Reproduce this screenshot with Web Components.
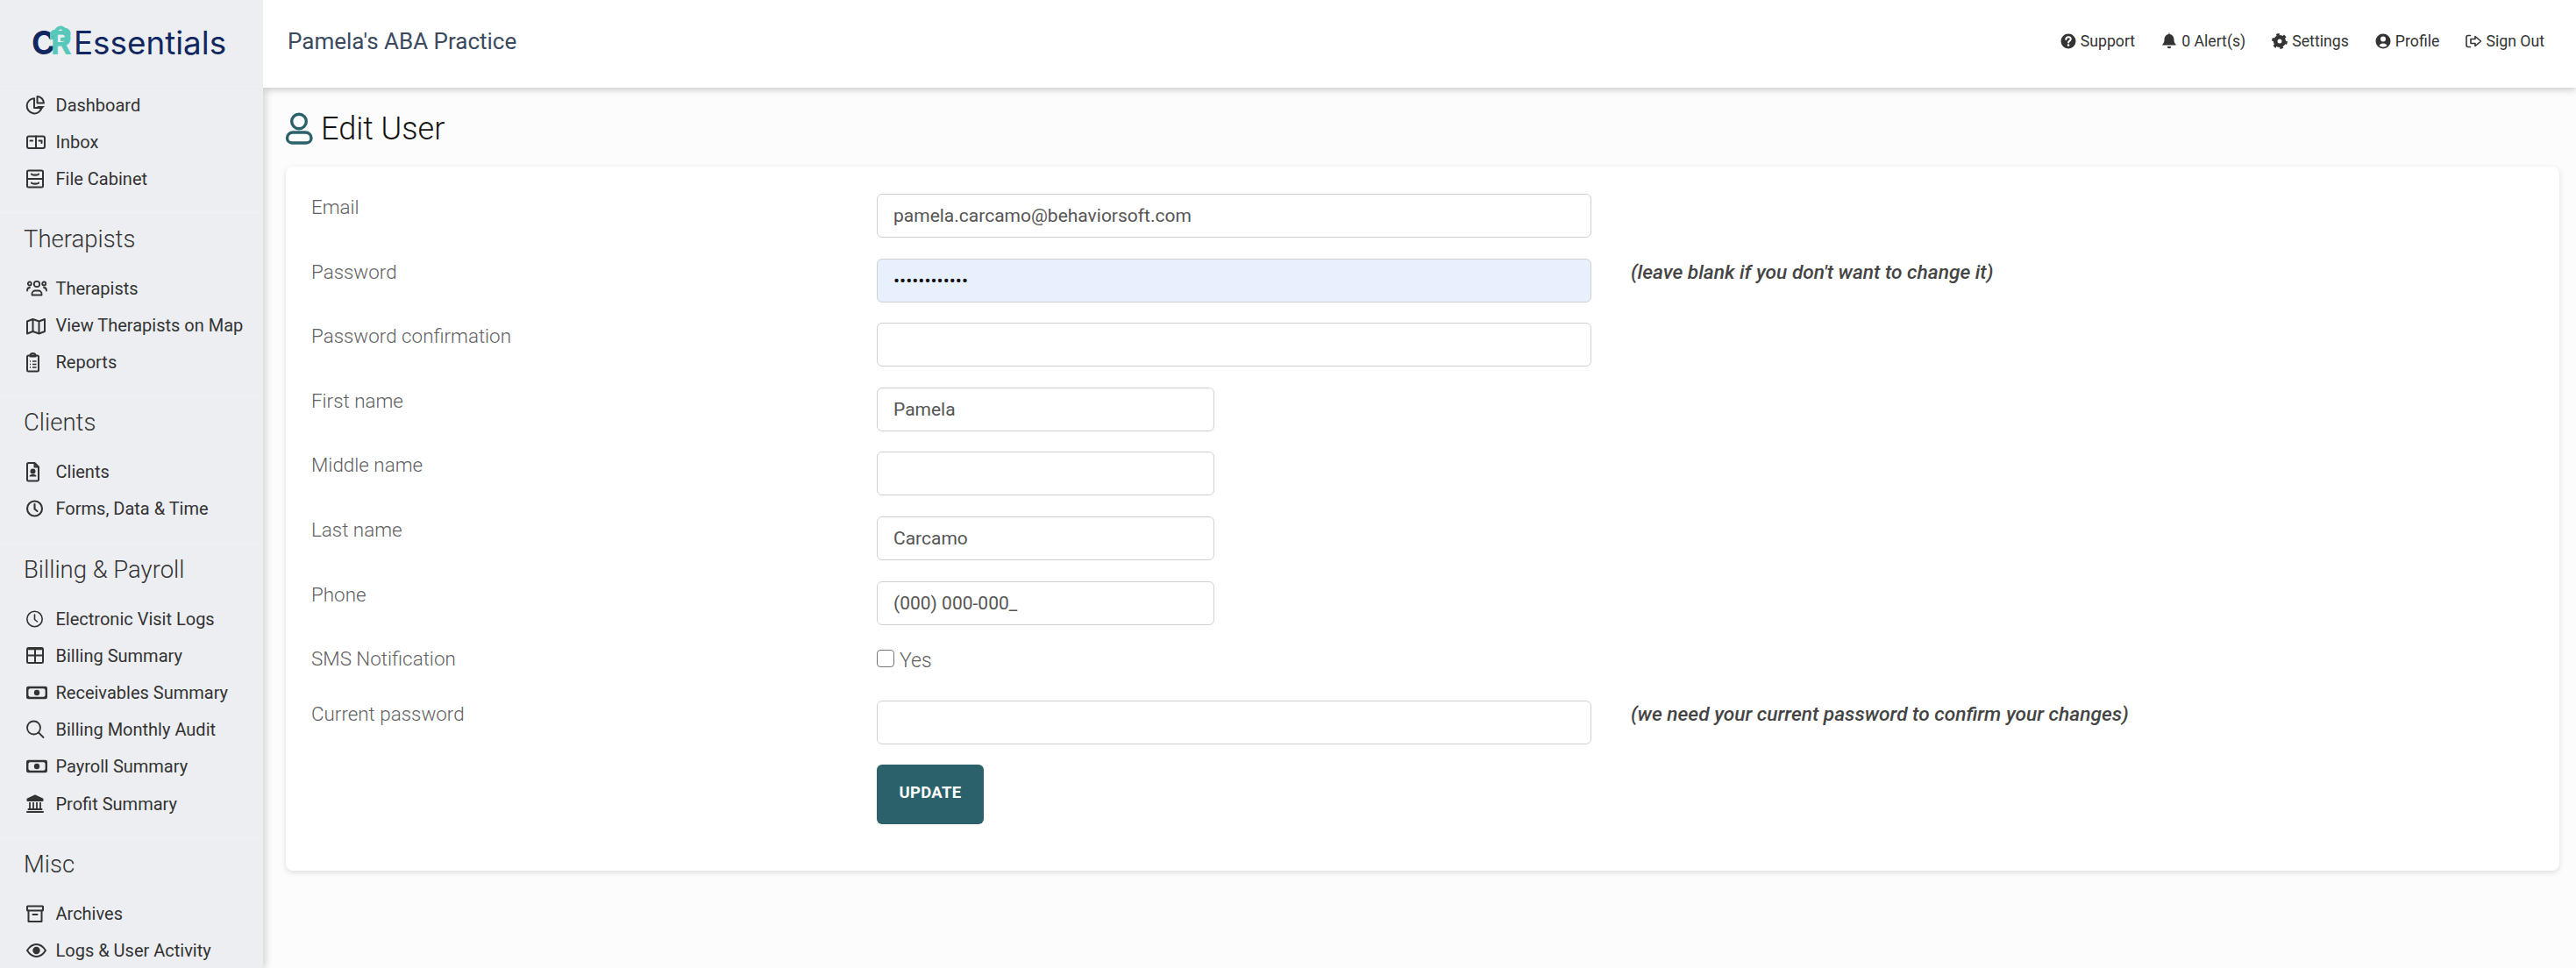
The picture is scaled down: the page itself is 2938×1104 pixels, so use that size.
<!DOCTYPE html>
<html lang="en">
<head>
<meta charset="utf-8">
<title>Edit User</title>
<style>
  html, body { margin: 0; height: 100%; overflow: hidden; }
  body { font-family: Roboto, "Liberation Sans", sans-serif; background: #fcfcfc; }
</style>
</head>
<body>
<app-shell>
  <side-bar slot="side">
    <nav-section>
      <nav-item icon="pie" label="Dashboard"></nav-item>
      <nav-item icon="inbox" label="Inbox"></nav-item>
      <nav-item icon="cabinet" label="File Cabinet"></nav-item>
    </nav-section>
    <nav-section heading="Therapists">
      <nav-item icon="users" label="Therapists"></nav-item>
      <nav-item icon="map" label="View Therapists on Map"></nav-item>
      <nav-item icon="clipboard" label="Reports"></nav-item>
    </nav-section>
    <nav-section heading="Clients">
      <nav-item icon="fileuser" label="Clients"></nav-item>
      <nav-item icon="clockbold" label="Forms, Data &amp; Time"></nav-item>
    </nav-section>
    <nav-section heading="Billing &amp; Payroll">
      <nav-item icon="clock" label="Electronic Visit Logs"></nav-item>
      <nav-item icon="table" label="Billing Summary"></nav-item>
      <nav-item icon="money" label="Receivables Summary"></nav-item>
      <nav-item icon="search" label="Billing Monthly Audit"></nav-item>
      <nav-item icon="money" label="Payroll Summary"></nav-item>
      <nav-item icon="bank" label="Profit Summary"></nav-item>
    </nav-section>
    <nav-section heading="Misc">
      <nav-item icon="archive" label="Archives"></nav-item>
      <nav-item icon="eye" label="Logs &amp; User Activity"></nav-item>
    </nav-section>
  </side-bar>
  <top-bar slot="top" practice="Pamela's ABA Practice">
    <top-link icon="question" label="Support"></top-link>
    <top-link icon="bell" label="0 Alert(s)"></top-link>
    <top-link icon="cog" label="Settings"></top-link>
    <top-link icon="usercircle" label="Profile"></top-link>
    <top-link icon="signout" label="Sign Out"></top-link>
  </top-bar>
  <edit-user-page>
    <form-row label="Email" value="pamela.carcamo@behaviorsoft.com"></form-row>
    <form-row label="Password" type="password" value="............" autofilled hint="(leave blank if you don't want to change it)"></form-row>
    <form-row label="Password confirmation" type="password"></form-row>
    <form-row label="First name" value="Pamela" size="small"></form-row>
    <form-row label="Middle name" size="small"></form-row>
    <form-row label="Last name" value="Carcamo" size="small"></form-row>
    <form-row label="Phone" value="(000) 000-000_" size="small"></form-row>
    <check-row label="SMS Notification" text="Yes"></check-row>
    <form-row label="Current password" type="password" hint="(we need your current password to confirm your changes)"></form-row>
    <submit-row text="UPDATE"></submit-row>
  </edit-user-page>
</app-shell>

<script>
const ICONS = {
  pie: '<path d="M9 4.200A8.600 8.600 0 1 0 17.600 15H9z"/><path d="M12.500 2A8 8 0 0 1 20 9.500h-7.500z"/><path d="M12 13h9l-4.500 4.500z" fill="currentColor" stroke="none"/>',
  inbox: '<rect x="1" y="5.500" width="20" height="13.500" rx="2"/><path d="M11 5.500V19M4.500 10.500h2.600M14.500 10.500h3V13"/>',
  cabinet: '<rect x="1" y="2.500" width="18" height="19" rx="1.500"/><path d="M1 12h18M6 6.500c0 1.500 8 1.500 8 0M6 16.500c0 1.500 8 1.500 8 0"/>',
  users: '<g stroke-width="1.800"><circle cx="12" cy="7" r="3.200"/><circle cx="3.800" cy="6.500" r="2"/><circle cx="20.200" cy="6.500" r="2"/><path d="M6.500 19.500v-1.500a3.500 3.500 0 0 1 3.500-3.500h4a3.500 3.500 0 0 1 3.500 3.500v1.500zM1 14.500c0-2 1.200-3.500 3-3.500M23 14.500c0-2-1.200-3.500-3-3.500"/></g>',
  map: '<path d="M1 7.500l6.500-2.500 7 2.500L21 5v14l-6.500 2.500L7.500 19 1 21.500zM7.500 5v14M14.500 7.500v14"/>',
  clipboard: '<rect x="1" y="4.500" width="13" height="18" rx="1.500"/><path d="M4.500 4.500c0-2 1.500-2.500 3-2.500s3 .5 3 2.500v1h-6z"/><path d="M4 11h1M7 11h4.500M4 14.500h1M7 14.500h4.500M4 18h1M7 18h4.500" stroke-width="1.400" stroke-linecap="butt"/>',
  fileuser: '<path d="M1 3.500A1.500 1.500 0 0 1 2.500 2H9.500L14 6.500V21a1.500 1.500 0 0 1-1.500 1.500h-10A1.500 1.500 0 0 1 1 21zM9.500 2v4.500H14"/><circle cx="7.500" cy="11.500" r="2" fill="currentColor"/><path d="M3.500 17.500c0-2 2-2.500 4-2.500s4 .5 4 2.500z" fill="currentColor" stroke="none"/>',
  clock: '<g stroke-width="1.600"><circle cx="9.500" cy="12" r="8.700"/><path d="M9.500 7v5.500l3 2.500"/></g>',
  clockbold: '<g stroke-width="2.100"><circle cx="9.500" cy="12" r="8.500"/><path d="M9.500 7v5.500l3 2.500"/></g>',
  table: '<rect x="1" y="3" width="18" height="17" rx="1.500"/><path d="M1 4h18" stroke-width="2.500" stroke-linecap="butt"/><path d="M1 11.500h18M10 3v17"/>',
  money: '<rect x="1.200" y="6" width="21.600" height="12" stroke-width="2.400" rx="1"/><circle cx="12" cy="12" r="3.200" fill="currentColor" stroke="none"/><path d="M1 6h4L1 10zM23 6h-4l4 4zM1 18h4l-4-4zM23 18h-4l4-4z" fill="currentColor" stroke="none"/>',
  search: '<g stroke-width="1.800"><circle cx="8.500" cy="10" r="7.500"/><path d="M14 15.500l5.500 5.500"/></g>',
  bank: '<path d="M10 2.500L1.500 6.500V8h17V6.500z" fill="currentColor"/><path d="M4 10v7M8 10v7M12 10v7M16 10v7" stroke-width="1.800" stroke-linecap="butt"/><path d="M2.500 18h15M1 21h18" stroke-width="2"/>',
  archive: '<rect x="1" y="3.500" width="18" height="5" rx=".5"/><path d="M2.500 8.500V21h15V8.500M7.500 13h5"/>',
  eye: '<path d="M1 12c3-4.800 6.500-7 10.500-7s7.500 2.200 10.500 7c-3 4.800-6.500 7-10.500 7S4 16.800 1 12z"/><circle cx="11.500" cy="12" r="4.200" fill="currentColor" stroke="none"/>',
  question: '<circle cx="9" cy="12" r="8.500" fill="currentColor" stroke="none"/><path d="M6.300 10c0-1.800 1.200-2.800 2.800-2.800s2.700 1 2.700 2.400c0 2-2.700 2-2.700 3.900" stroke="#fff" stroke-width="2"/><circle cx="9" cy="16.500" r="1.300" fill="#fff" stroke="none"/>',
  bell: '<path d="M8 3.500c-3.500.6-5 3.300-5 6.300 0 3.700-1.500 4.400-2.500 6.200h16c-1-1.800-2.500-2.500-2.500-6.200 0-3-1.500-5.700-5-6.300V2H8z" fill="currentColor" stroke="none" transform="translate(.5 .5)"/><path d="M6.800 18a2.200 2.200 0 0 0 4.400 0z" fill="currentColor" stroke="none"/>',
  cog: '<circle cx="9" cy="12" r="4.800" stroke-width="4.600"/><circle cx="9" cy="12" r="7.700" stroke-width="2.400" stroke-dasharray="3.600 4.460" stroke-linecap="butt"/>',
  usercircle: '<circle cx="9" cy="12" r="8.500" fill="currentColor" stroke="none"/><circle cx="9" cy="9.500" r="3" fill="#fff" stroke="none"/><path d="M4.500 17c.6-1.800 2.300-2.600 4.500-2.600s3.900.8 4.500 2.600A7 7 0 0 1 9 18.800 7 7 0 0 1 4.500 17z" fill="#fff" stroke="none"/>',
  signout: '<path d="M5.500 5.500H3A2 2 0 0 0 1 7.500v9a2 2 0 0 0 2 2h2.500" stroke-width="1.600"/><path d="M11 6.500l6.500 5.500-6.500 5.500v-3H6v-5h5z" stroke-width="1.600"/>',
  person: '<circle cx="16" cy="10.500" r="8.300" stroke-width="3.400"/><path d="M7.500 35h17a5.500 5.500 0 0 0 5.500-5.500 6.500 6.500 0 0 0-6.500-6.500H9a6.500 6.500 0 0 0-6.500 6.500A5.500 5.500 0 0 0 7.500 35z" stroke-width="3.400"/>'
};

function iconSvg(name, w = 24, h = 24) {
  return `<svg width="${w}" height="${h}" viewBox="0 0 ${w} ${h}" fill="none" stroke="currentColor" stroke-width="2" stroke-linecap="round" stroke-linejoin="round" style="overflow:visible;display:block">${ICONS[name]}</svg>`;
}

class Base extends HTMLElement {
  constructor() {
    super();
    this.attachShadow({ mode: 'open' });
  }
  connectedCallback() {
    this.render();
  }
  attr(name, fallback = '') {
    return this.getAttribute(name) ?? fallback;
  }
}

class AppShell extends Base {
  render() {
    this.shadowRoot.innerHTML = `
      <style>
        :host {
          display: grid;
          grid-template-columns: 300px 1fr;
          grid-template-rows: 100px 1fr;
          height: 1104px;
          overflow: hidden;
        }
        .side { grid-row: 1 / 3; grid-column: 1; z-index: 2; }
        .top { grid-row: 1; grid-column: 2; z-index: 3; }
        main { grid-row: 2; grid-column: 2; min-width: 0; }
      </style>
      <div class="side"><slot name="side"></slot></div>
      <div class="top"><slot name="top"></slot></div>
      <main><slot></slot></main>
    `;
  }
}

class SideBar extends Base {
  render() {
    this.shadowRoot.innerHTML = `
      <style>
        :host {
          display: flex;
          flex-direction: column;
          height: 1104px;
          background: #eceef2;
        }
        .nav {
          flex: 1;
          overflow: hidden;
          background: #eceef2;
          box-shadow: 3px 0 8px rgba(0,0,0,.16);
          clip-path: inset(0 -20px 0 0);
          border-top: 1px solid #f0f1f4;
        }
        .logo {
          height: 98px;
          flex: none;
          box-sizing: border-box;
          display: flex;
          align-items: center;
          padding: 0 0 2px 36px;
          font-family: Inter, Roboto, sans-serif;
          color: #12275f;
          font-size: 36.800px;
        }
        .mark { font-weight: 700; display: flex; width: 48px; flex: none; position: relative; }
        .c { letter-spacing: -5.500px; }
        .r { color: #57c8b9; }
        .cloud { position: absolute; left: 21px; top: 2px; }
      </style>
      <div class="logo">
        <span class="mark"><span class="c">C</span><span class="r">R</span>
          <svg class="cloud" width="24" height="20" viewBox="0 0 24 20"><path d="M2 17C0 11 3 7 7 8 8 3 14 2 16 6c4-1 7 3 5 7-1 3-5 4-9 4" fill="none" stroke="#57c8b9" stroke-width="4"/></svg>
        </span>
        <span>Essentials</span>
      </div>
      <div class="nav"><slot></slot></div>
    `;
  }
}

class NavSection extends Base {
  render() {
    const heading = this.attr('heading');
    this.shadowRoot.innerHTML = `
      <style>
        :host {
          display: block;
          padding-bottom: 16px;
          border-bottom: 1px solid #f1f2f5;
        }
        :host([heading]) { padding-bottom: 17px; }
        h3 {
          margin: 0;
          padding: 12px 0 17px 27px;
          font: 300 27.500px/36px Roboto, sans-serif;
          color: #333;
        }
        .list { display: flex; flex-direction: column; }
      </style>
      ${heading ? `<h3>${heading.replace('&', '&amp;')}</h3>` : ''}
      <div class="list"><slot></slot></div>
    `;
  }
}

class NavItem extends Base {
  render() {
    this.shadowRoot.innerHTML = `
      <style>
        :host {
          display: flex;
          align-items: center;
          height: 42.200px;
          padding-left: 30px;
          color: #333;
          font: 400 20px Roboto, sans-serif;
          white-space: nowrap;
        }
        .ic { width: 33.500px; flex: none; }
      </style>
      <span class="ic">${iconSvg(this.attr('icon'))}</span>
      <span>${this.attr('label').replace('&', '&amp;')}</span>
    `;
  }
}

class TopBar extends Base {
  render() {
    this.shadowRoot.innerHTML = `
      <style>
        :host {
          display: flex;
          align-items: center;
          justify-content: space-between;
          height: 100px;
          box-sizing: border-box;
          padding: 0 36px 6px 28px;
          background: #fff;
          box-shadow: 0 2px 8px rgba(0,0,0,.22);
          clip-path: inset(0 0 -20px 0);
        }
        .practice { font: 400 26px Roboto, sans-serif; color: #3b4a5e; }
        .links { display: flex; gap: 30px; }
      </style>
      <div class="practice">${this.attr('practice')}</div>
      <div class="links"><slot></slot></div>
    `;
  }
}

class TopLink extends Base {
  render() {
    this.shadowRoot.innerHTML = `
      <style>
        :host {
          display: flex;
          align-items: center;
          gap: 5px;
          color: #333;
          font: 400 17.700px Roboto, sans-serif;
          white-space: nowrap;
        }
      </style>
      ${iconSvg(this.attr('icon'), 18, 24)}
      <span>${this.attr('label')}</span>
    `;
  }
}

class EditUserPage extends Base {
  render() {
    this.shadowRoot.innerHTML = `
      <style>
        :host { display: block; padding: 0 19px 0 26px; }
        .title {
          display: flex;
          align-items: center;
          gap: 9px;
          height: 90px;
          margin-left: -1px;
          padding-top: 2px;
          box-sizing: border-box;
          color: #2a616a;
        }
        h1 { margin: 2px 0 0; font: 300 36px Roboto, sans-serif; color: #111; }
        .card {
          background: #fff;
          border-radius: 8px;
          box-shadow: 0 2px 6px rgba(0,0,0,.13);
          padding: 31px 29px 53px;
        }
      </style>
      <div class="title">${iconSvg('person', 32, 36)}<h1>Edit User</h1></div>
      <div class="card"><slot></slot></div>
    `;
  }
}

const ROW_STYLE = `
  :host {
    display: grid;
    grid-template-columns: 645px 815px 1fr;
    font-family: Roboto, sans-serif;
  }
  label {
    font: 300 22.400px/31px Roboto, sans-serif;
    color: #5f5f63;
  }
`;

class FormRow extends Base {
  render() {
    const small = this.attr('size') === 'small';
    const type = this.attr('type', 'text');
    const hint = this.attr('hint');
    this.shadowRoot.innerHTML = `
      <style>
        ${ROW_STYLE}
        :host { margin-bottom: 23.600px; }
        input {
          display: block;
          box-sizing: border-box;
          width: ${small ? '385px' : '100%'};
          height: 50px;
          padding: 0 18px;
          border: 1.500px solid #d0d0d0;
          border-radius: 6px;
          background: #fff;
          color: #555;
          font: 400 21px Roboto, sans-serif;
          outline: 0;
        }
        input.auto { background: #e8f0fe; color: #111; }
        .hint {
          padding-left: 45px;
          font: italic 500 22.700px/32px Roboto, sans-serif;
          color: #444;
        }
      </style>
      <label>${this.attr('label')}</label>
      <div class="field">
        <input class="${this.hasAttribute('autofilled') ? 'auto' : ''}" type="${type}" value="${this.attr('value')}" tabindex="-1">
      </div>
      <div class="hint">${hint}</div>
    `;
  }
}

class CheckRow extends Base {
  render() {
    this.shadowRoot.innerHTML = `
      <style>
        ${ROW_STYLE}
        :host { margin-bottom: 22.500px; }
        .box { display: flex; align-items: center; gap: 6px; height: 46px; margin-top: -6px; }
        input {
          appearance: none;
          margin: 0 0 5px;
          width: 20px;
          height: 20px;
          border: 1.500px solid #767676;
          border-radius: 4px;
          background: #fff;
        }
        span { font: 300 23px Roboto, sans-serif; color: #5f5f63; }
      </style>
      <label>${this.attr('label')}</label>
      <div class="box"><input type="checkbox" tabindex="-1"><span>${this.attr('text')}</span></div>
    `;
  }
}

class SubmitRow extends Base {
  render() {
    this.shadowRoot.innerHTML = `
      <style>
        :host { display: block; padding-left: 645px; }
        button {
          display: block;
          width: 122px;
          height: 68px;
          padding: 0 0 4px;
          border: 0;
          border-radius: 6px;
          background: #2a616a;
          color: #fff;
          font: 700 18.500px Roboto, sans-serif;
          letter-spacing: .3px;
        }
      </style>
      <button type="button">${this.attr('text')}</button>
    `;
  }
}

customElements.define('app-shell', AppShell);
customElements.define('side-bar', SideBar);
customElements.define('nav-section', NavSection);
customElements.define('nav-item', NavItem);
customElements.define('top-bar', TopBar);
customElements.define('top-link', TopLink);
customElements.define('edit-user-page', EditUserPage);
customElements.define('form-row', FormRow);
customElements.define('check-row', CheckRow);
customElements.define('submit-row', SubmitRow);
</script>
</body>
</html>
